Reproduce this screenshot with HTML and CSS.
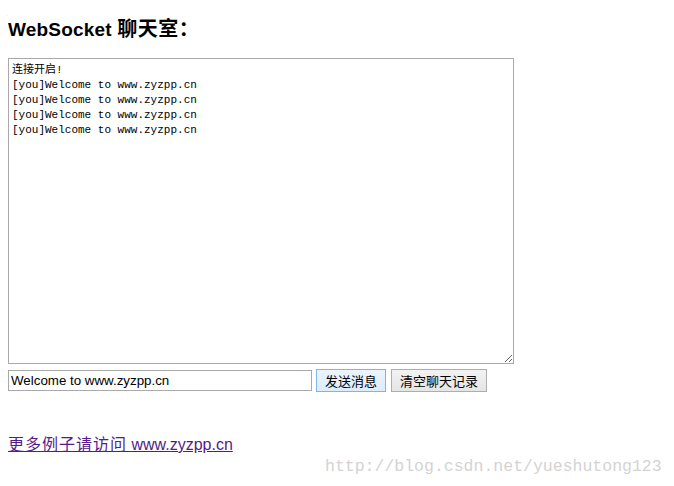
FILE: index.html
```html
<!DOCTYPE html>
<html>
<head>
<meta charset="utf-8">
<link rel="stylesheet" href="styles.css">
</head>
<body>
<h3 class="title">WebSocket <span class="cjk">聊天室：</span></h3>
<textarea class="log" readonly>连接开启!
[you]Welcome to www.zyzpp.cn
[you]Welcome to www.zyzpp.cn
[you]Welcome to www.zyzpp.cn
[you]Welcome to www.zyzpp.cn</textarea>
<div class="controls">
  <input class="msg" type="text" value="Welcome to www.zyzpp.cn">
  <button class="btn btn-send">发送消息</button>
  <button class="btn">清空聊天记录</button>
</div>
<p class="more"><a class="link" href="#"><span class="cjk-link">更多例子请访问</span> www.zyzpp.cn</a></p>
<div class="watermark">http://blog.csdn.net/yueshutong123</div>
</body>
</html>
```
FILE: styles.css
```css
html, body {
  background: #fff;
}
body {
  margin: 8px;
  font-family: "Liberation Sans", "Noto Sans CJK SC", sans-serif;
  position: relative;
  height: 470px;
  overflow: hidden;
}
.title {
  margin: 9px 0 0 0;
  height: 24px;
  line-height: 24px;
  font-size: 19px;
  font-weight: bold;
  color: #000;
  font-family: "Liberation Sans", "Noto Sans CJK SC", sans-serif;
  letter-spacing: 0.2px;
}
.cjk {
  font-size: 20px;
  letter-spacing: 0.5px;
}
.log {
  display: block;
  margin: 17px 0 0 0;
  box-sizing: border-box;
  width: 506px;
  height: 306px;
  border: 1px solid #a9a9a9;
  padding: 4px 3px 2px 3px;
  font-family: "Liberation Mono", "Noto Sans CJK SC", monospace;
  font-size: 11px;
  line-height: 15px;
  color: #000;
  resize: both;
  outline: none;
}
.controls {
  display: flex;
  align-items: center;
  margin-top: 4px;
  height: 24px;
}
.msg {
  box-sizing: border-box;
  width: 304px;
  height: 21px;
  margin: 0;
  border: 1px solid #a9a9a9;
  padding: 1px 2px;
  font-family: "Liberation Sans", sans-serif;
  font-size: 13.33px;
  color: #000;
  outline: none;
}
.btn {
  box-sizing: border-box;
  height: 23px;
  margin: 0 0 0 4px;
  padding: 0 6px;
  border: 1px solid #adadad;
  background: linear-gradient(#f2f2f2, #e5e5e5);
  font-family: "Noto Sans CJK SC", sans-serif;
  font-size: 13px;
  color: #000;
  border-radius: 0;
}
.btn-send {
  width: 70px;
  border-color: #7eb4ea;
  background: linear-gradient(#ecf4fc, #dcecfc);
}
.btn + .btn {
  margin-left: 5px;
  width: 96px;
}
.more {
  margin: 43px 0 0 0;
  font-size: 16px;
  line-height: 20px;
}
.link {
  color: #551a8b;
  text-decoration: underline;
  font-family: "Liberation Sans", "Noto Sans CJK SC", sans-serif;
}
.cjk-link {
  letter-spacing: 1px;
}
.watermark {
  position: absolute;
  left: 317px;
  top: 449px;
  font-family: "Liberation Mono", monospace;
  font-size: 16.5px;
  color: #d3d3d3;
  white-space: nowrap;
}
```
